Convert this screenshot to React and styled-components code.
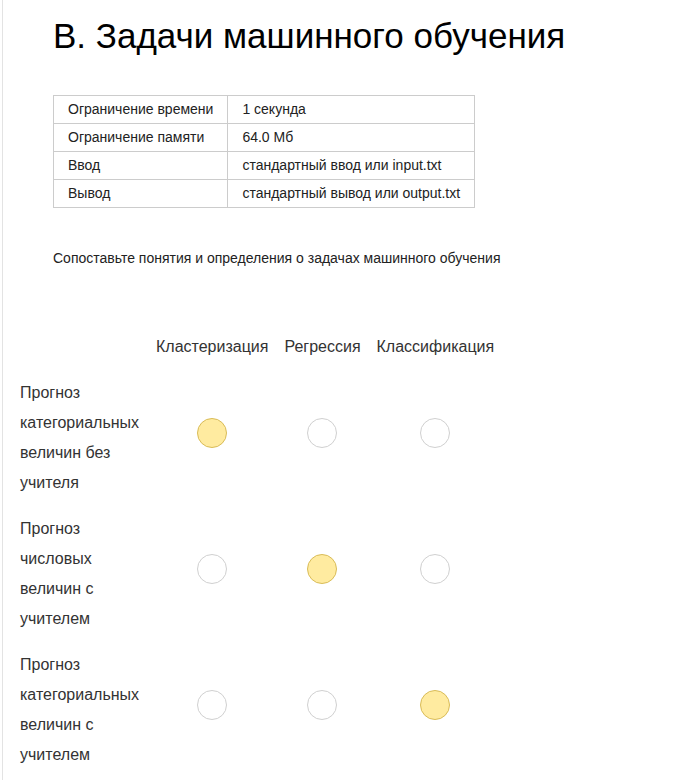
import React, { useState } from 'react';
import styled, { createGlobalStyle } from 'styled-components';

const GlobalStyle = createGlobalStyle`
  body {
    margin: 0;
    background: #fff;
    font-family: 'Liberation Sans', Arial, sans-serif;
  }
`;

const limits = [
  ['Ограничение времени', '1 секунда'],
  ['Ограничение памяти', '64.0 Мб'],
  ['Ввод', 'стандартный ввод или input.txt'],
  ['Вывод', 'стандартный вывод или output.txt'],
];

const options = ['Кластеризация', 'Регрессия', 'Классификация'];

const questions = [
  'Прогноз категориальных величин без учителя',
  'Прогноз числовых величин с учителем',
  'Прогноз категориальных величин с учителем',
];

const App = () => {
  const [answers, setAnswers] = useState([0, 1, 2]);

  const pick = (row, col) => {
    const next = [...answers];
    next[row] = col;
    setAnswers(next);
  };

  return (
    <Page>
      <GlobalStyle />
      <Problem>
        <Title>B. Задачи машинного обучения</Title>
        <LimitsTable>
          <tbody>
            {limits.map(([name, value]) => (
              <tr key={name}>
                <LimitCell>{name}</LimitCell>
                <LimitCell>{value}</LimitCell>
              </tr>
            ))}
          </tbody>
        </LimitsTable>
        <Statement>
          Сопоставьте понятия и определения о задачах машинного обучения
        </Statement>
      </Problem>
      <Matrix>
        <thead>
          <tr>
            <HeadCell />
            {options.map(o => (
              <HeadCell key={o}>{o}</HeadCell>
            ))}
          </tr>
        </thead>
        <tbody>
          {questions.map((q, row) => (
            <tr key={q}>
              <LabelCell>
                <Label>{q}</Label>
              </LabelCell>
              {options.map((o, col) => (
                <RadioCell key={o}>
                  <Radio
                    type="button"
                    checked={answers[row] === col}
                    onClick={() => pick(row, col)}
                  />
                </RadioCell>
              ))}
            </tr>
          ))}
        </tbody>
      </Matrix>
    </Page>
  );
};

export default App;

const Page = styled.div`
  margin-left: 2px;
  min-height: 780px;
  border-left: 1px solid #e3e3e3;
  padding-left: 9px;
  box-sizing: border-box;
`;

const Problem = styled.div`
  padding-left: 41px;
`;

const Title = styled.h1`
  margin: 0;
  padding-top: 15px;
  font-size: 35px;
  font-weight: 400;
  line-height: 41px;
  color: #000;
`;

const LimitsTable = styled.table`
  margin-top: 39px;
  border-collapse: collapse;
  width: 422px;
  font-size: 14px;
  color: #222;
  tr:first-child td {
    border-top: 1px solid #ccc;
  }
`;

const LimitCell = styled.td`
  height: 27px;
  padding: 0 14px;
  border: 1px solid #ccc;
  border-top: none;
  line-height: 27px;
  white-space: nowrap;
  &:first-child {
    width: 146px;
  }
`;

const Statement = styled.p`
  margin: 40px 0 0;
  font-size: 14px;
  line-height: 20px;
  color: #222;
`;

const Matrix = styled.table`
  margin-top: 60px;
  border-collapse: collapse;
  font-size: 16px;
  color: #333;
`;

const HeadCell = styled.th`
  padding: 8px;
  font-weight: 400;
  line-height: 21px;
  white-space: nowrap;
`;

const LabelCell = styled.td`
  padding: 13px 8px 3px;
  vertical-align: middle;
`;

const Label = styled.div`
  width: 120px;
  line-height: 30px;
`;

const RadioCell = styled.td`
  padding: 8px;
  text-align: center;
  vertical-align: middle;
`;

const Radio = styled.button`
  display: inline-block;
  width: 30px;
  height: 30px;
  padding: 0;
  border-radius: 50%;
  border: 1px solid ${props => (props.checked ? '#d9bc58' : '#d0d0d0')};
  background: ${props => (props.checked ? '#ffeba0' : '#fff')};
  cursor: pointer;
  vertical-align: middle;
`;
